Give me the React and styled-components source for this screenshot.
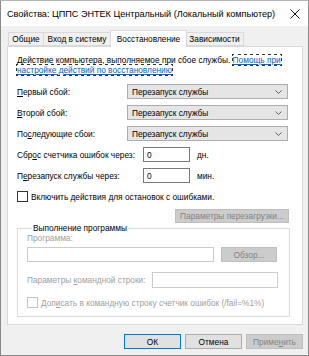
import styled, { createGlobalStyle } from "styled-components";

const GlobalStyle = createGlobalStyle`
  html, body {
    margin: 0;
    padding: 0;
    background: #f0f0f0;
  }
  body {
    font-family: "Liberation Sans", "Noto Sans", Arial, sans-serif;
    font-size: 8.3px;
    color: #000;
  }
`;

const Window = styled.div`
  width: 309px;
  height: 356px;
  box-sizing: border-box;
  border: 1px solid #8a8a8a;
  border-top-color: #b5b5b5;
  background: #f0f0f0;
  display: flex;
  flex-direction: column;
`;

const TitleBar = styled.div`
  height: 25px;
  background: #fff;
  display: flex;
  align-items: center;
  justify-content: space-between;
  padding: 0 8px 0 6px;
  font-size: 9.1px;
  white-space: nowrap;
`;

const CloseIcon = () => (
  <svg width="10" height="10" viewBox="0 0 10 10">
    <path d="M0.5 0.5L9.5 9.5M9.5 0.5L0.5 9.5" stroke="#111" strokeWidth="1" />
  </svg>
);

const Body = styled.div`
  flex: 1;
  display: flex;
  flex-direction: column;
  padding: 3px 5px 0 6px;
`;

const Tabs = styled.div`
  display: flex;
  align-items: flex-end;
  height: 17px;
  padding-left: 1px;
  position: relative;
  z-index: 1;
`;

const Tab = styled.div`
  width: ${(p) => p.$w}px;
  height: ${(p) => (p.$active ? "17px" : "14px")};
  box-sizing: border-box;
  margin: ${(p) => (p.$active ? "0 -1px -1px" : "0 0 0 -1px")};
  border: 1px solid #d9d9d9;
  border-bottom: ${(p) => (p.$active ? "none" : "1px solid #d9d9d9")};
  background: ${(p) => (p.$active ? "#fff" : "#f0f0f0")};
  display: flex;
  align-items: center;
  justify-content: center;
  white-space: nowrap;
  position: relative;
  z-index: ${(p) => (p.$active ? 2 : 1)};
  &:first-child {
    margin-left: 0;
  }
`;

const Panel = styled.div`
  height: 279px;
  box-sizing: border-box;
  border: 1px solid #d9d9d9;
  background: #fff;
  padding: 8px 13px 0 9px;
  display: flex;
  flex-direction: column;
`;

const Desc = styled.p`
  margin: 0;
  line-height: 10px;
`;

const HelpLink = styled.a`
  color: #0066cc;
  text-decoration: underline;
  outline: 1px dotted #333;
  outline-offset: 0;
  & span {
    white-space: nowrap;
  }
`;

const Row = styled.div`
  display: flex;
  align-items: center;
  height: ${(p) => p.$h || 15}px;
  margin-top: ${(p) => p.$gap || 6}px;
`;

const Label = styled.span`
  width: ${(p) => p.$w || "auto"};
  flex-shrink: 0;
  white-space: nowrap;
  color: ${(p) => (p.$disabled ? "#a0a0a0" : "#000")};
`;

const Select = styled.div`
  width: 161px;
  height: 15px;
  box-sizing: border-box;
  border: 1px solid #adadad;
  background: #e5e5e5;
  display: flex;
  align-items: center;
  justify-content: space-between;
  padding: 0 5px 0 4px;
`;

const Chevron = () => (
  <svg width="7" height="4" viewBox="0 0 7 4">
    <path d="M0.5 0.5L3.5 3.5L6.5 0.5" fill="none" stroke="#606060" strokeWidth="1" />
  </svg>
);

const Input = styled.div`
  width: ${(p) => p.$w}px;
  height: ${(p) => p.$h || 15}px;
  box-sizing: border-box;
  border: 1px solid ${(p) => (p.$disabled ? "#cccccc" : "#7a7a7a")};
  background: #fff;
  padding: 0 3px;
  display: flex;
  align-items: center;
  flex-shrink: 0;
`;

const Unit = styled.span`
  margin-left: 7px;
`;

const Check = styled.span`
  width: 11px;
  height: 11px;
  box-sizing: border-box;
  border: 1px solid ${(p) => (p.$disabled ? "#c4c4c4" : "#333")};
  background: #fff;
  margin-right: 3px;
  flex-shrink: 0;
`;

const Button = styled.div`
  width: ${(p) => p.$w}px;
  height: ${(p) => p.$h || 15}px;
  margin-left: ${(p) => p.$ml || 0}px;
  box-sizing: border-box;
  display: flex;
  align-items: center;
  justify-content: center;
  white-space: nowrap;
  border: 1px solid ${(p) => (p.$disabled ? "#bfbfbf" : p.$default ? "#0078d7" : "#adadad")};
  background: ${(p) => (p.$disabled ? "#cccccc" : "#e1e1e1")};
  color: ${(p) => (p.$disabled ? "#838383" : "#000")};
  flex-shrink: 0;
`;

const RightRow = styled(Row)`
  justify-content: flex-end;
`;

const Group = styled.fieldset`
  margin: 0;
  padding: 0 11px 0 9px;
  height: 94px;
  box-sizing: border-box;
  border: 1px solid #dcdcdc;
  display: flex;
  flex-direction: column;
`;

const Legend = styled.legend`
  padding: 0 1px;
  margin-left: 5px;
  line-height: 10px;
`;

const Footer = styled.div`
  display: flex;
  justify-content: flex-end;
  gap: 4px;
  padding: 9px 0 0;
`;

export default function App() {
  return (
    <>
      <GlobalStyle />
      <Window>
        <TitleBar>
          <span>Свойства: ЦППС ЭНТЕК Центральный (Локальный компьютер)</span>
          <CloseIcon />
        </TitleBar>
        <Body>
          <Tabs>
            <Tab $w={36}>Общие</Tab>
            <Tab $w={68}>Вход в систему</Tab>
            <Tab $w={77} $active>Восстановление</Tab>
            <Tab $w={59}>Зависимости</Tab>
          </Tabs>
          <Panel>
            <Desc>
              Действие компьютера, выполняемое при сбое службы.{" "}
              <HelpLink>
                <span>Помощь при</span>
                <br />
                настройке действий по восстановлению
              </HelpLink>
            </Desc>

            <Row $gap={9}>
              <Label $w="110px"><u>П</u>ервый сбой:</Label>
              <Select>
                <span>Перезапуск службы</span>
                <Chevron />
              </Select>
            </Row>
            <Row>
              <Label $w="110px"><u>В</u>торой сбой:</Label>
              <Select>
                <span>Перезапуск службы</span>
                <Chevron />
              </Select>
            </Row>
            <Row>
              <Label $w="110px">По<u>с</u>ледующие сбои:</Label>
              <Select>
                <span>Перезапуск службы</span>
                <Chevron />
              </Select>
            </Row>

            <Row>
              <Label $w="126px">Сбр<u>о</u>с счетчика ошибок через:</Label>
              <Input $w={47}>0</Input>
              <Unit>дн.</Unit>
            </Row>
            <Row>
              <Label $w="126px">П<u>е</u>резапуск службы через:</Label>
              <Input $w={47}>0</Input>
              <Unit>мин.</Unit>
            </Row>
            <Row>
              <Check />
              <Label>Включить действия для остановок с ошибками.</Label>
            </Row>
            <RightRow $gap={5} $h={14}>
              <Button $w={114} $h={14} $disabled>Параметры перезагрузки...</Button>
            </RightRow>

            <Group>
              <Legend>Выполнение программы</Legend>
              <Label $disabled>Программа:</Label>
              <Row $gap={4}>
                <Input $w={187} $disabled />
                <Button $w={56} $ml={7} $disabled>Обзор...</Button>
              </Row>
              <Row $gap={10} $h={16}>
                <Label $disabled $w="125px">Параметры <u>к</u>омандной строки:</Label>
                <Input $w={126} $h={16} $disabled />
              </Row>
              <Row $gap={7}>
                <Check $disabled />
                <Label $disabled>Доп<u>и</u>сать в командную строку счетчик ошибок (/fail=%1%)</Label>
              </Row>
            </Group>
          </Panel>
          <Footer>
            <Button $w={57} $default>ОК</Button>
            <Button $w={57}>Отмена</Button>
            <Button $w={57} $disabled>Приме<u>н</u>ить</Button>
          </Footer>
        </Body>
      </Window>
    </>
  );
}
